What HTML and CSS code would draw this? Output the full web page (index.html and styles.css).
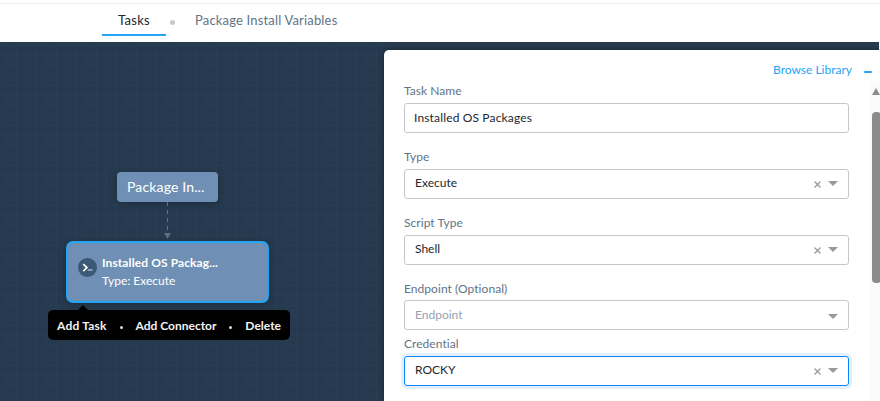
FILE: index.html
```html
<!DOCTYPE html>
<html lang="en">
<head>
<meta charset="utf-8">
<title>Tasks</title>
<link rel="stylesheet" href="styles.css">
</head>
<body>
<nav class="tabs">
  <a class="tab active"><span>Tasks</span></a>
  <i class="sep"></i>
  <a class="tab vars"><span>Package Install Variables</span></a>
</nav>
<main class="workspace">
  <section class="canvas">
    <div class="node root"><span>Package In...</span></div>
    <svg class="link" width="11" height="40" viewBox="0 0 11 40"><path d="M5.500 0V31" stroke="#5d7081" stroke-dasharray="4 4" fill="none"/><path d="M2 31h7l-3.500 6z" fill="#5d7081"/></svg>
    <div class="node task">
      <svg class="shell" width="19" height="19" viewBox="0 0 19 19"><circle cx="9.500" cy="9.500" r="9.500" fill="#3b5876"/><path d="M5.300 6.100l3.600 3.500-3.600 3.500" fill="none" stroke="#fff" stroke-width="1.700"/><path d="M9.700 12h4.800" stroke="#d5dee8" stroke-width="1.100"/></svg>
      <div class="info"><b>Installed OS Packag...</b><span>Type: Execute</span></div>
    </div>
    <div class="menu"><span class="m1">Add Task</span><i></i><span class="m2">Add Connector</span><i></i><span class="m3">Delete</span></div>
  </section>
  <aside class="panel">
    <header class="head"><a>Browse Library</a><i class="minus"></i></header>
    <form class="form">
      <label>Task Name</label>
      <div class="field name"><span>Installed OS Packages</span></div>
      <label>Type</label>
      <div class="field"><span>Execute</span><svg class="x" width="7" height="7" viewBox="0 0 7 7"><path d="M.5.5l6 6M6.500.5l-6 6"/></svg><i class="arrow"></i></div>
      <label>Script Type</label>
      <div class="field"><span>Shell</span><svg class="x" width="7" height="7" viewBox="0 0 7 7"><path d="M.5.5l6 6M6.500.5l-6 6"/></svg><i class="arrow"></i></div>
      <label>Endpoint (Optional)</label>
      <div class="field empty"><span>Endpoint</span><i class="arrow"></i></div>
      <label>Credential</label>
      <div class="field focus"><span>ROCKY</span><svg class="x" width="7" height="7" viewBox="0 0 7 7"><path d="M.5.5l6 6M6.500.5l-6 6"/></svg><i class="arrow"></i></div>
    </form>
    <div class="scroll"><i class="up"></i><i class="thumb"></i></div>
  </aside>
</main>
</body>
</html>
```
FILE: styles.css
```css
* { box-sizing: border-box; }
body { margin: 0; width: 880px; height: 401px; overflow: hidden; background: #fff; font: 12px/16px Lato, sans-serif; color: #22272e; display: flex; flex-direction: column; }
.tabs { flex: none; height: 42px; display: flex; padding-left: 102px; margin: 0; background: linear-gradient(#f0f1f2, #f0f1f2) 0 3px / 100% 1px no-repeat; font-size: 13px; color: #627386; }
.tab { height: 36px; padding: 12px 16px 0; white-space: nowrap; }
.tab.active { width: 64px; border-bottom: 2px solid #22a5f7; color: #22272e; letter-spacing: .3px; }
.tab.vars { letter-spacing: .17px; }
.sep { width: 5px; height: 5px; border-radius: 50%; background: #c8c8c8; margin: 20px 4px 0; }
.workspace { flex: 1; min-height: 0; display: flex; position: relative; margin-right: 1px; background-color: #263a4f;
  background-image: linear-gradient(#293e53 1px, transparent 1px), linear-gradient(90deg, #293e53 1px, transparent 1px); background-size: 10px 10px; background-position: 6px 3px; }
.canvas { width: 384px; position: relative; }
.node { position: absolute; background: #6f90b4; color: #fff; border-radius: 4px; box-shadow: 0 2px 8px rgba(0,0,0,.25); white-space: nowrap; }
.root { left: 117px; top: 130px; width: 101px; height: 30px; padding-left: 10px; font-size: 14px; line-height: 30px; letter-spacing: .15px; }
.link { position: absolute; left: 162px; top: 160px; }
.task { left: 66px; top: 199px; width: 203px; height: 62px; border: 2px solid #22a5f7; border-radius: 7px; display: flex; padding: 11px 0 0 10px; gap: 5px; }
.shell { margin-top: 4px; }
.info { display: flex; flex-direction: column; line-height: 18px; }
.info b { letter-spacing: .1px; }
.menu { position: absolute; left: 48px; top: 268px; width: 242px; height: 30px; border-radius: 5px; background: #000; color: #f2f2f2; font-weight: 700; line-height: 30px; padding: 2px 9px 0; display: flex; align-items: center; justify-content: space-between; white-space: nowrap; }
.m1 { letter-spacing: .2px; }
.menu::before { content: ""; position: absolute; left: 30px; top: -5px; border: 5px solid transparent; border-top: 0; border-bottom-color: #000; }
.menu i { width: 3px; height: 3px; border-radius: 50%; background: #ddd; margin-top: 2px; }
.panel { flex: 1; margin: 8px -1px 0 0; background: #fff; border-radius: 5px 0 0 0; position: relative; box-shadow: 0 0 5px rgba(0,0,0,.4); padding-left: 20px; }
.head { height: 33px; display: flex; justify-content: flex-end; padding: 12px 8px 0 0; color: #22a5f7; }
.minus { width: 8px; height: 2px; border-radius: 1px; background: #22a5f7; margin: 9px 0 0 12px; }
.form { width: 445px; margin: 0; }
label { display: block; height: 16px; color: #627386; letter-spacing: .05px; }
.field { height: 30px; margin: 4px 0 16px; border: 1px solid #c4c8cc; border-radius: 3px; display: flex; align-items: center; padding: 0 10px; }
.field span { flex: 1; margin-top: -3px; }
.field.name { padding-left: 9px; }
.field.name span { margin-top: -1px; letter-spacing: .15px; }
.field.empty { color: #97a2b4; margin: 3px 0 6px; }
.field.empty span { margin-top: -1px; }
.field.focus { border-color: #0a84ff; box-shadow: 0 0 0 3px #e3f1fe; }
.x { margin-right: 7px; margin-top: 0; stroke: #999; stroke-width: 1.300; }
.arrow { border: 5px solid transparent; border-top-color: #999; border-bottom: 0; margin-top: -1px; }
.empty .arrow { margin-top: 3px; }
.scroll { position: absolute; right: 0; top: 31px; bottom: 0; width: 11px; background: #fbfbfb; overflow: hidden; display: flex; flex-direction: column; padding: 7px 0 0 3px; }
.up { width: 0; border: 4px solid transparent; border-top: 0; border-bottom: 7px solid #8b8b8b; }
.thumb { width: 9px; height: 171px; margin-top: 17px; border-radius: 4px; background: #8b8b8b; flex: none; }
```
